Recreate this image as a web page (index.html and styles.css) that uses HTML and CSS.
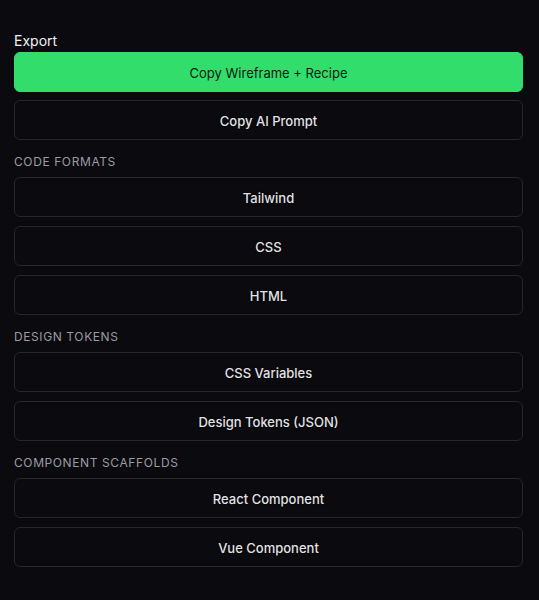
FILE: index.html
```html
<!DOCTYPE html>
<html>
<head>
<meta charset="utf-8">
<link rel="stylesheet" href="styles.css">
</head>
<body>
<div class="panel">
  <div class="title">Export</div>
  <div class="group group-export">
    <button class="btn btn-primary">Copy Wireframe + Recipe</button>
    <button class="btn">Copy AI Prompt</button>
  </div>
  <div class="section-label">Code Formats</div>
  <div class="group">
    <button class="btn">Tailwind</button>
    <button class="btn">CSS</button>
    <button class="btn">HTML</button>
  </div>
  <div class="section-label">Design Tokens</div>
  <div class="group">
    <button class="btn">CSS Variables</button>
    <button class="btn">Design Tokens (JSON)</button>
  </div>
  <div class="section-label">Component Scaffolds</div>
  <div class="group">
    <button class="btn">React Component</button>
    <button class="btn">Vue Component</button>
  </div>
</div>
</body>
</html>
```
FILE: styles.css
```css
html, body {
  margin: 0;
  padding: 0;
  background: #0b0a0f;
  font-family: Inter, "Noto Sans", "Liberation Sans", sans-serif;
  height: 100%;
}
.panel {
  padding: 32px 16px 0 14px;
  display: flex;
  flex-direction: column;
}
.title {
  color: #f0f0f2;
  font-size: 14px;
  line-height: 17px;
  margin-bottom: 3px;
}
.group {
  display: flex;
  flex-direction: column;
  gap: 9px;
}
.group-export {
  gap: 8px;
}
.btn {
  box-sizing: border-box;
  height: 40px;
  width: 100%;
  border: 1px solid #27262c;
  border-radius: 6px;
  background: #0b0a0f;
  color: #e2e2e5;
  font-family: inherit;
  font-size: 13px;
  font-weight: 500;
  text-shadow: 0 0 2px #000;
  cursor: pointer;
  padding: 1px 0 0;
}
.btn-primary {
  background: #33dd6b;
  border-color: #33dd6b;
  color: #0d1a10;
  font-weight: 400;
  text-shadow: none;
}
.section-label {
  color: #9c9ba3;
  font-size: 12px;
  line-height: 16px;
  letter-spacing: 0.6px;
  text-transform: uppercase;
  margin: 14px 0 7px;
}
```
